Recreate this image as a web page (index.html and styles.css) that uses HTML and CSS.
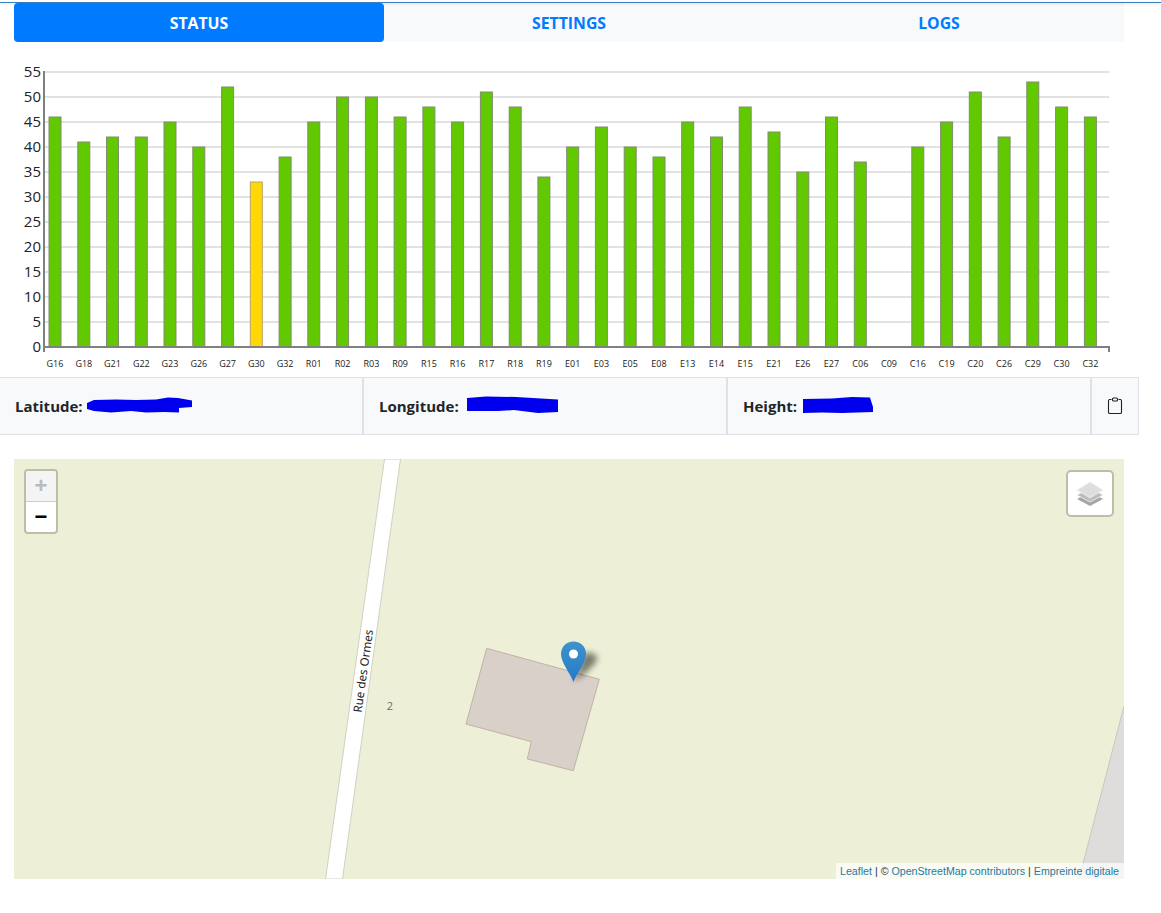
FILE: index.html
```html
<!DOCTYPE html>
<html lang="en">
<head>
<meta charset="utf-8">
<title>GNSS status</title>
<link rel="stylesheet" href="styles.css">
</head>
<body>
<div class="topline"></div>
<nav class="tabs">
  <a class="tab active">STATUS</a>
  <a class="tab">SETTINGS</a>
  <a class="tab">LOGS</a>
</nav>
<svg class="chart" width="1124" height="317" viewBox="0 60 1124 317">
  <g class="grid">
    <line x1="44" x2="1109" y1="72" y2="72"/><line x1="44" x2="1109" y1="97" y2="97"/><line x1="44" x2="1109" y1="122" y2="122"/><line x1="44" x2="1109" y1="147" y2="147"/><line x1="44" x2="1109" y1="172" y2="172"/><line x1="44" x2="1109" y1="197" y2="197"/><line x1="44" x2="1109" y1="222" y2="222"/><line x1="44" x2="1109" y1="247" y2="247"/><line x1="44" x2="1109" y1="272" y2="272"/><line x1="44" x2="1109" y1="297" y2="297"/><line x1="44" x2="1109" y1="322" y2="322"/>
  </g>
  <g class="ylabels">
    <text x="41" y="77">55</text><text x="41" y="102">50</text><text x="41" y="127">45</text><text x="41" y="152">40</text><text x="41" y="177">35</text><text x="41" y="202">30</text><text x="41" y="227">25</text><text x="41" y="252">20</text><text x="41" y="277">15</text><text x="41" y="302">10</text><text x="41" y="327">5</text><text x="41" y="352">0</text>
  </g>
  <g class="bars">
    <rect x="49" y="117" width="12" height="230"/><rect x="77.8" y="142" width="12" height="205"/><rect x="106.5" y="137" width="12" height="210"/><rect x="135.3" y="137" width="12" height="210"/><rect x="164" y="122" width="12" height="225"/><rect x="192.8" y="147" width="12" height="200"/><rect x="221.6" y="87" width="12" height="260"/><rect class="warn" x="250.3" y="182" width="12" height="165"/><rect x="279.1" y="157" width="12" height="190"/><rect x="307.8" y="122" width="12" height="225"/><rect x="336.6" y="97" width="12" height="250"/><rect x="365.4" y="97" width="12" height="250"/><rect x="394.1" y="117" width="12" height="230"/><rect x="422.9" y="107" width="12" height="240"/><rect x="451.6" y="122" width="12" height="225"/><rect x="480.4" y="92" width="12" height="255"/><rect x="509.2" y="107" width="12" height="240"/><rect x="537.9" y="177" width="12" height="170"/><rect x="566.7" y="147" width="12" height="200"/><rect x="595.4" y="127" width="12" height="220"/><rect x="624.2" y="147" width="12" height="200"/><rect x="653" y="157" width="12" height="190"/><rect x="681.7" y="122" width="12" height="225"/><rect x="710.5" y="137" width="12" height="210"/><rect x="739.2" y="107" width="12" height="240"/><rect x="768" y="132" width="12" height="215"/><rect x="796.8" y="172" width="12" height="175"/><rect x="825.5" y="117" width="12" height="230"/><rect x="854.3" y="162" width="12" height="185"/><rect x="911.8" y="147" width="12" height="200"/><rect x="940.6" y="122" width="12" height="225"/><rect x="969.3" y="92" width="12" height="255"/><rect x="998.1" y="137" width="12" height="210"/><rect x="1026.8" y="82" width="12" height="265"/><rect x="1055.6" y="107" width="12" height="240"/><rect x="1084.4" y="117" width="12" height="230"/>
  </g>
  <path class="axis" d="M44 71V352M44 347H1109V352"/>
  <g class="xlabels">
    <text x="55" y="367">G16</text><text x="83.8" y="367">G18</text><text x="112.5" y="367">G21</text><text x="141.3" y="367">G22</text><text x="170" y="367">G23</text><text x="198.8" y="367">G26</text><text x="227.6" y="367">G27</text><text x="256.3" y="367">G30</text><text x="285.1" y="367">G32</text><text x="313.8" y="367">R01</text><text x="342.6" y="367">R02</text><text x="371.4" y="367">R03</text><text x="400.1" y="367">R09</text><text x="428.9" y="367">R15</text><text x="457.6" y="367">R16</text><text x="486.4" y="367">R17</text><text x="515.2" y="367">R18</text><text x="543.9" y="367">R19</text><text x="572.7" y="367">E01</text><text x="601.4" y="367">E03</text><text x="630.2" y="367">E05</text><text x="659" y="367">E08</text><text x="687.7" y="367">E13</text><text x="716.5" y="367">E14</text><text x="745.2" y="367">E15</text><text x="774" y="367">E21</text><text x="802.8" y="367">E26</text><text x="831.5" y="367">E27</text><text x="860.3" y="367">C06</text><text x="889" y="367">C09</text><text x="917.8" y="367">C16</text><text x="946.6" y="367">C19</text><text x="975.3" y="367">C20</text><text x="1004.1" y="367">C26</text><text x="1032.8" y="367">C29</text><text x="1061.6" y="367">C30</text><text x="1090.4" y="367">C32</text>
  </g>
</svg>
<section class="info">
  <div class="cell"><b>Latitude:</b>
    <svg class="scribble" width="108" height="18" viewBox="0 0 108 18"><path d="M1 6 8 3 30 2.500 50 3 70 2.500 82 .5 92 1 106 3.500V10L93 11V15.500L78 15 60 15.500 45 14 25 15.500 8 14 1 12Z"/></svg>
  </div>
  <div class="cell"><b>Longitude:</b>
    <svg class="scribble" width="98" height="20" viewBox="0 0 98 20"><path d="M5 2 24 .5 54 1 96 3.500V16L76 17 52 14 36 15H5Z"/></svg>
  </div>
  <div class="cell"><b>Height:</b>
    <svg class="scribble" width="74" height="18" viewBox="0 0 74 18"><path d="M3 2 32 1.500 52 0 70 .5 73 10V15L42 16 22 15.500 3 16Z"/></svg>
  </div>
  <div class="cell copy">
    <svg width="16" height="18" viewBox="0 0 16 18"><path class="clip" d="M4.500 2.500H2.500A1.300 1.300 0 0 0 1.500 3.800V15.200A1.300 1.300 0 0 0 2.800 16.500H13.200A1.300 1.300 0 0 0 14.500 15.200V3.800A1.300 1.300 0 0 0 13.500 2.500H11.500"/><rect class="clip" x="5.500" y="1" width="5" height="3" rx="1"/></svg>
  </div>
</section>
<section class="map">
  <svg class="tiles" width="1110" height="420" viewBox="14 459 1110 420">
    <polygon class="ground" points="1124,706 1079,879 1124,879"/>
    <line class="ground-edge" x1="1124" y1="706" x2="1079" y2="879"/>
    <polygon class="road" points="384.500,459 400.500,459 342.500,879 325.500,879"/>
    <text class="road-name" transform="translate(361.500 713) rotate(-82)">Rue des Ormes</text>
    <text class="house-no" x="390" y="710">2</text>
    <polygon class="building" points="486.700,648.300 599.300,679.300 573.300,770.700 527.300,759 531.300,741.700 466,724"/>
    <defs>
      <linearGradient id="pin" x1="0" y1="0" x2="0" y2="1"><stop offset="0" stop-color="#3f93cc"/><stop offset="1" stop-color="#2579c8"/></linearGradient>
      <filter id="blur" x="-50%" y="-50%" width="200%" height="200%"><feGaussianBlur stdDeviation="3"/></filter>
    </defs>
    <path class="pin-shadow" d="M574 681C582 676 592 668 597 660 598 654 590 651 584 654 581 663 577 672 574 681Z" filter="url(#blur)"/>
    <path fill="url(#pin)" d="M573.500 682C570 673 561 662.500 561 654 561 646.500 566.500 641.500 573.500 641.500S586 646.500 586 654C586 662.500 577 673 573.500 682Z"/>
    <circle class="pin-dot" cx="573.500" cy="654" r="4.500"/>
  </svg>
  <div class="zoom">
    <a class="zoom-btn disabled">+</a>
    <a class="zoom-btn">−</a>
  </div>
  <div class="layers">
    <svg width="28" height="26" viewBox="0 0 28 26">
      <path fill="#a6a6a6" d="M14 11 27 18 14 25 1 18Z"/>
      <path fill="#bcbcbc" stroke="#f3f3f3" stroke-width=".8" d="M14 7 27 14 14 21 1 14Z"/>
      <path fill="#dedede" stroke="#f0f0f0" stroke-width=".8" d="M14 1 27 9 14 17 1 9Z"/>
    </svg>
  </div>
  <div class="attribution"><a>Leaflet</a> | © <a>OpenStreetMap contributors</a> | <a>Empreinte digitale</a></div>
</section>
</body>
</html>
```
FILE: styles.css
```css
* { box-sizing: border-box; }
html, body { margin: 0; padding: 0; background: #fff; }
body { width: 1161px; height: 913px; overflow: hidden; font-family: "Open Sans", "Noto Sans", sans-serif; color: #212529; position: relative; }
.topline { position: absolute; left: 0; right: 0; top: 2px; height: 1px; background: #3a7db8; box-shadow: 0 1px 3px rgba(0, 0, 0, .18); }
.tabs { display: flex; width: 1110px; margin: 3px 0 0 14px; height: 39px; background: #f8f9fa; }
.tab { flex: 1; display: flex; align-items: center; justify-content: center; font-size: 15.800px; font-weight: 700; color: #007bff; border-radius: 4px; }
.tab.active { position: relative; z-index: 1; background: #007bff; color: #fff; }
.chart { display: block; margin-top: 18px; }
.grid line { stroke: #e2e2e2; stroke-width: 2; }
.ylabels text { font-size: 15px; text-anchor: end; fill: #222; }
.bars rect { fill: #62c800; stroke: #808c70; stroke-width: 1; }
.bars rect.warn { fill: #ffd806; stroke: #b8a468; }
.axis { fill: none; stroke: #808080; stroke-width: 2; }
.xlabels text { font-size: 9px; text-anchor: middle; fill: #1a1a1a; }
.info { display: flex; width: 1139px; height: 58px; background: #f8f9fa; border-top: 1px solid #dee2e6; border-bottom: 1px solid #dee2e6; border-right: 1px solid #dee2e6; }
.cell { width: 364px; display: flex; align-items: center; gap: 3px; padding-left: 15px; font-size: 15px; border-right: 2px solid #dee2e6; }
.cell b { font-weight: 700; }
.cell.copy { width: auto; flex: 1; padding: 0; justify-content: center; border-right: 0; }
.scribble path { fill: #0000ee; }
.clip { fill: none; stroke: #222; stroke-width: 1.100; }
.map { position: relative; width: 1110px; height: 420px; margin: 24px 0 0 14px; background: #edf0d6; overflow: hidden; }
.tiles { display: block; }
.ground { fill: #dfdcdc; }
.ground-edge { stroke: #c9c6c0; stroke-width: 1; }
.road { fill: #fff; stroke: #d0d0c4; stroke-width: 1; }
.road-name { font-size: 11.700px; fill: #222; font-family: "Noto Sans", sans-serif; }
.house-no { font-size: 11px; fill: #6b6b6b; text-anchor: middle; }
.building { fill: #d8d0c9; stroke: #bfb3a6; stroke-width: 1; }
.pin-shadow { fill: rgba(0, 0, 0, .5); }
.pin-dot { fill: #fff; }
.zoom { position: absolute; left: 10px; top: 10px; width: 34px; border: 2px solid #bdbdab; border-radius: 4px; background: #fff; }
.zoom-btn { display: block; height: 30px; text-align: center; font: 700 22px/30px "Liberation Sans", sans-serif; color: #000; }
.zoom-btn.disabled { background: #f4f4f4; color: #bbb; border-bottom: 1px solid #ccc; height: 31px; border-radius: 2px 2px 0 0; }
.layers { position: absolute; right: 10px; top: 11px; width: 48px; height: 47px; background: #fff; border: 2px solid #bdbdab; border-radius: 5px; display: flex; align-items: center; justify-content: center; }
.attribution { position: absolute; right: 0; bottom: 0; height: 16px; padding: 0 5px 0 4px; background: rgba(255, 255, 255, .7); font: 10.650px/16px "Liberation Sans", sans-serif; color: #333; }
.attribution a { color: #1f7aa0; }
```
